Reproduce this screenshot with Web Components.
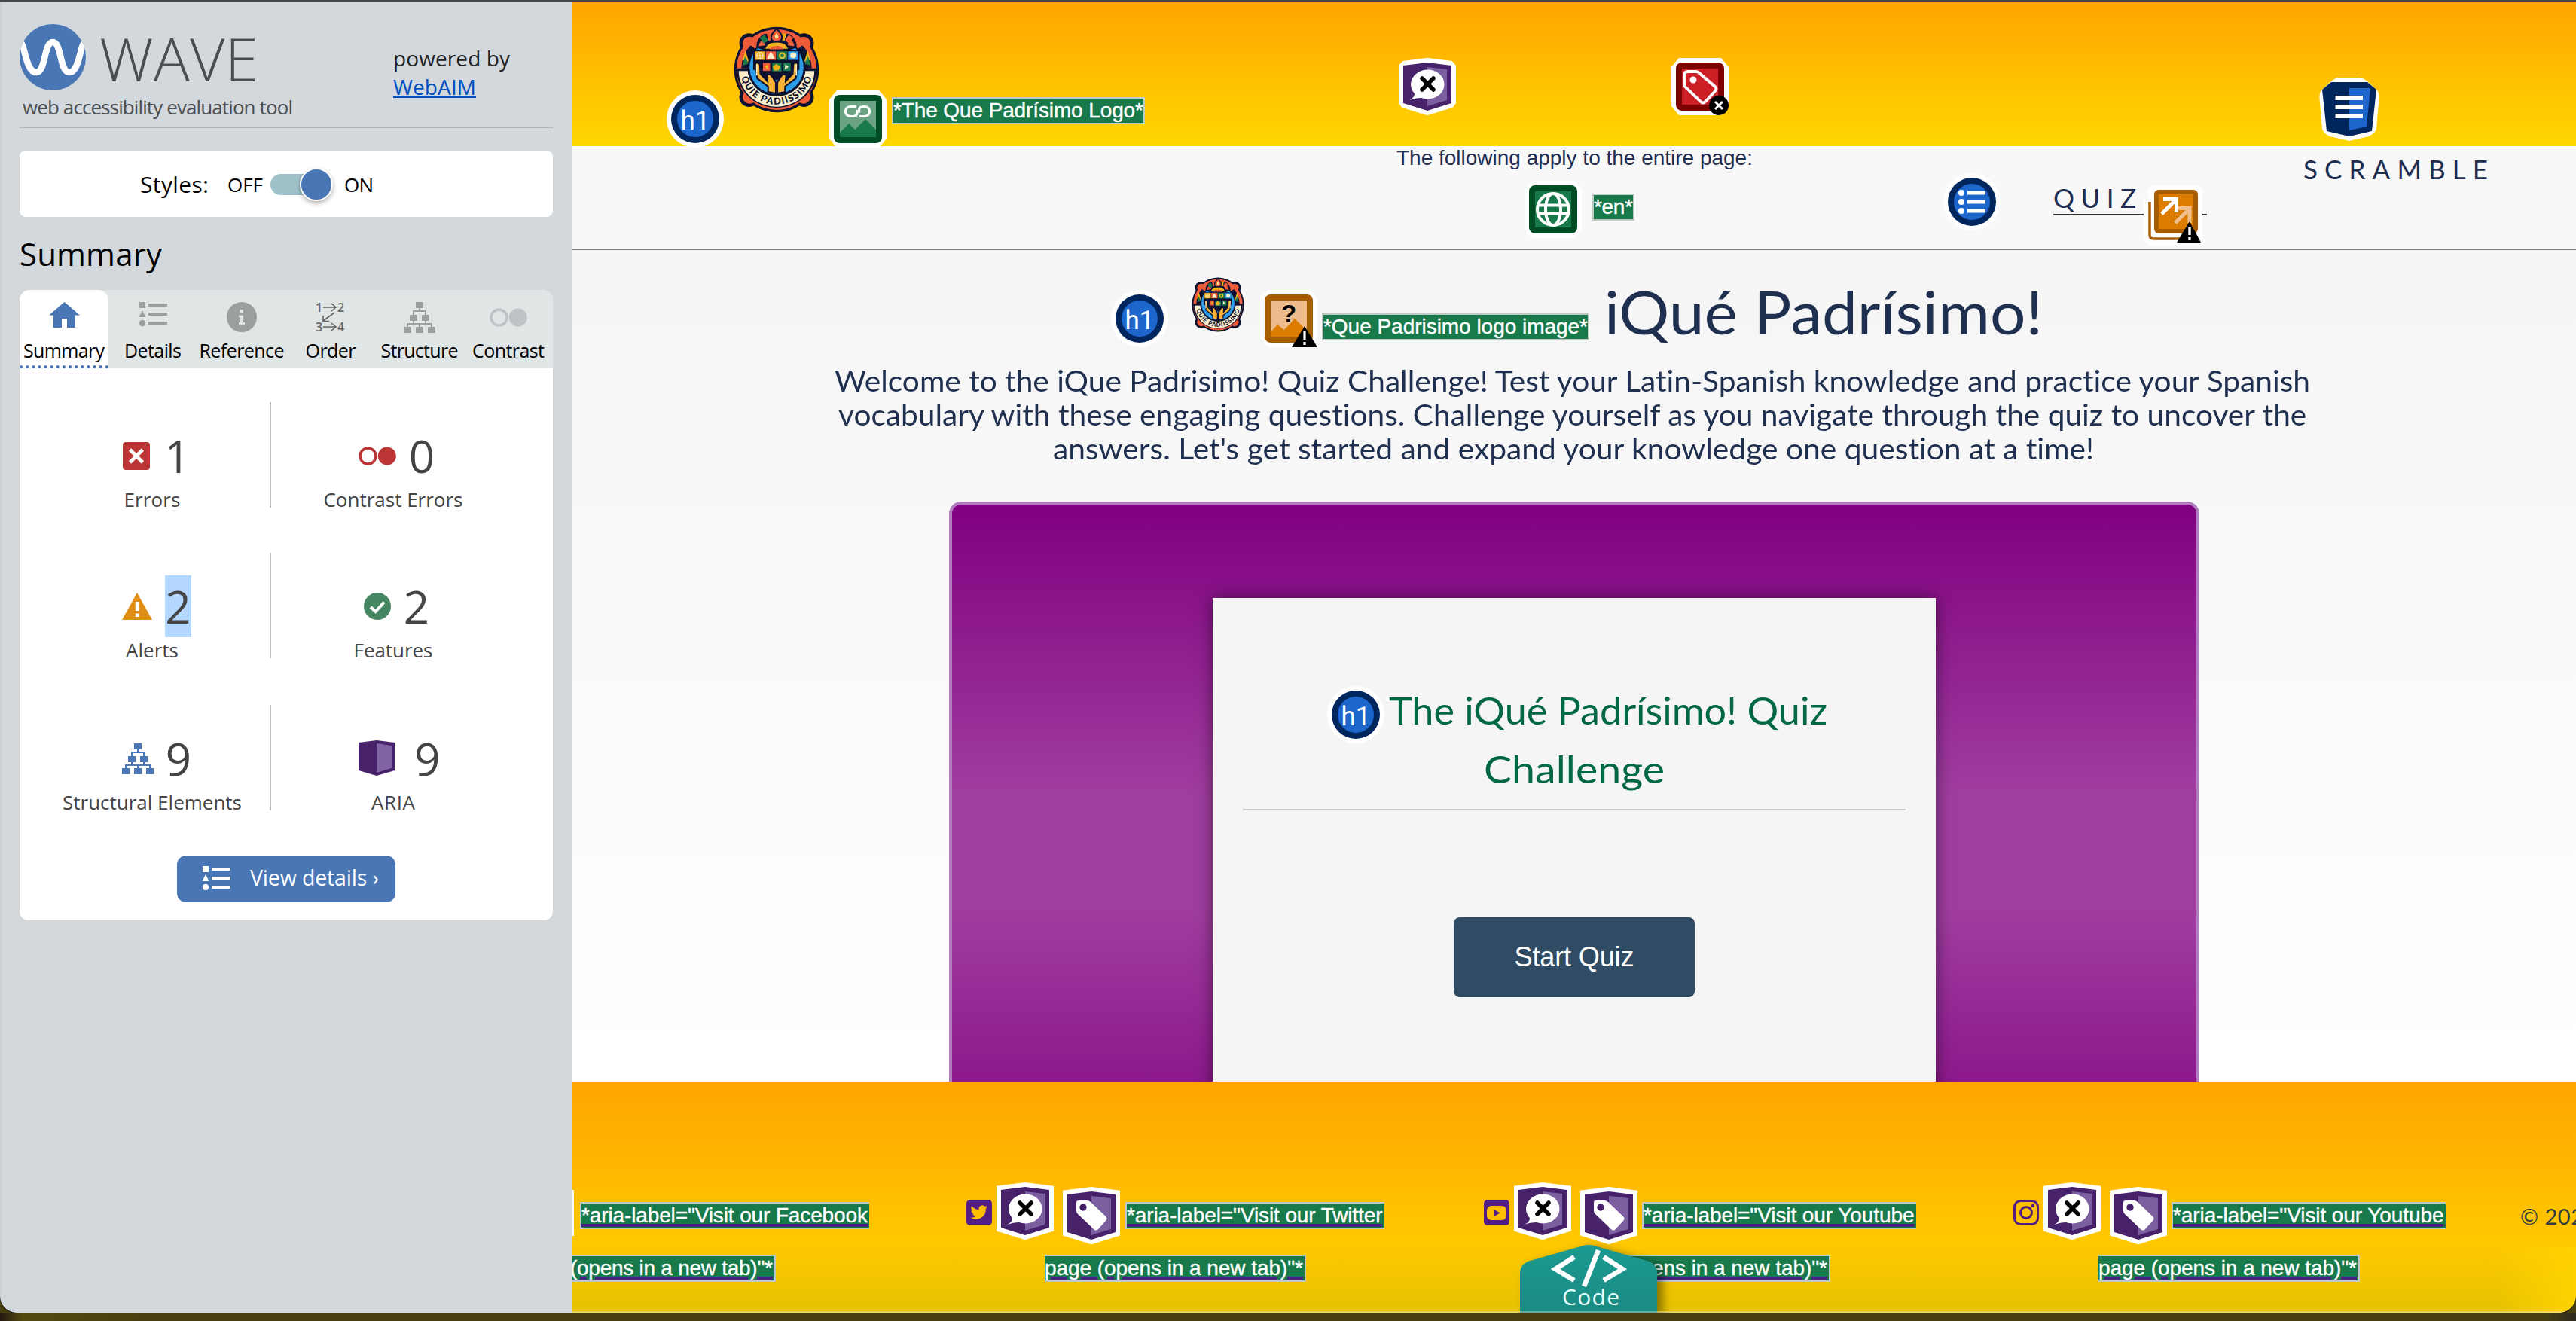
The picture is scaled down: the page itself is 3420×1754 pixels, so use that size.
<!DOCTYPE html>
<html lang="en">
<head>
<meta charset="utf-8">
<title>WAVE - ¡Qué Padrísimo!</title>
<style>
html,body{margin:0;padding:0;width:3420px;height:1754px;overflow:hidden;background:#473f10;font-family:"Open Sans","Noto Sans",sans-serif}
</style>
</head>
<body>
<wave-app></wave-app>
<script>
const FONTS={
  os:['"Open Sans"',.388],
  lato:['Lato',.387],
  arial:['"Liberation Sans"',.3465]
};
const ctx=document.createElement('canvas').getContext('2d');
/* A tiny tracking value keeps ligatures out of the measured width. */
ctx.letterSpacing='0.001px';
function measure(text,font,size,weight){
  ctx.font=`${weight} ${size}px ${FONTS[font][0]}`;
  return ctx.measureText(text).width;
}
function spacing(text,font,size,weight,w){
  return (w-measure(text,font,size,weight))/Math.max(1,[...text].length-1);
}
class Base extends HTMLElement{
  connectedCallback(){
    if(this.shadowRoot)return;
    const r=this.attachShadow({mode:'open'});
    r.innerHTML=`<style>:host{display:block;flex:none;box-sizing:border-box}*{box-sizing:border-box}${this.css()}</style>${this.html()}`;
  }
  css(){return ''}
  html(){return '<slot></slot>'}
  a(n,d){return this.getAttribute(n)??d}
}

/* One line of text set to a given width, by tracking or (with "stretch") by widening the glyphs;
   "base" sets its baseline below the row top. */
class FitText extends Base{
  css(){
    const f=this.a('font','os'),s=+this.a('size'),wt=this.a('weight','400'),w=+this.a('w'),t=this.textContent;
    const st=this.hasAttribute('stretch');
    const fit=st?`letter-spacing:0`:`letter-spacing:${spacing(t,f,s,wt,w).toFixed(3)}px`;
    const mt=this.hasAttribute('base')?(+this.a('base')-(.5+FONTS[f][1])*s):0;
    return `:host{width:${w}px;height:${s}px;font:${wt} ${s}px/${s}px ${FONTS[f][0]},sans-serif;font-variant-ligatures:none;${fit};white-space:nowrap;margin-top:${mt.toFixed(2)}px}
    ${st?`span{display:inline-block;transform-origin:0 50%;transform:scaleX(${(w/measure(t,f,s,wt)).toFixed(4)})}`:''}`;
  }
  html(){return '<span><slot></slot></span>'}
}
/* Green annotation label. */
class AltLabel extends Base{
  css(){
    const w=+this.a('w'),open=this.hasAttribute('open-end'),u=this.hasAttribute('link'),start=this.hasAttribute('open-start');
    const ls=spacing(this.textContent,'arial',28,'400',w-4);
    return `:host{width:${w}px;height:36px;background:#18794a;color:#fff;border:2px solid #bfc9c4;${open?'border-right:0;':''}${start?'border-left:0;':''}padding-left:0;font:28px/32px "Liberation Sans",sans-serif;letter-spacing:${ls.toFixed(3)}px;white-space:nowrap;-webkit-text-stroke:.4px #fff}
    span{${u?'text-decoration:underline #472280 4px;text-underline-offset:2px;':''}}`;
  }
  html(){return '<span><slot></slot></span>'}
}

const cube=(dark,light)=>`<path d="M0 4 32 0 64 4V54L32 64 0 54Z" fill="${dark}"/><path d="M32 6 58 9V50L32 58Z" fill="${light}"/>`;
const warn=`<path d="M53 42 70 70H36Z" fill="#000"/><path d="M53 49V60M53 63V67" stroke="#fff" stroke-width="3.2"/>`;
const halo=(bevel)=>`<path d="M0 4 32 0 64 4V54L32 64 0 54Z" fill="#fff" stroke="#fff" stroke-width="12" stroke-linejoin="${bevel?'bevel':'miter'}"/>`;
const square=(dark,light)=>`<path d="M4-6H60L70 6V58L60 70H4L-6 58V6Z" fill="#fff"/><rect x="-4" y="-4" width="72" height="72" rx="12" fill="#fff"/><rect width="64" height="64" rx="8" fill="${dark}"/><rect x="8" y="8" width="48" height="48" fill="${light}"/>`;
const round=`<circle cx="32" cy="32" r="38" fill="#fff"/><circle cx="32" cy="32" r="32" fill="#00265e"/><circle cx="32" cy="32" r="24" fill="#1c66cc"/>`;
const bubble=`<path d="M8 50Q15 47 15 41A22 19 0 1 1 32 48Q22 45 8 50Z" fill="#fff"/><ellipse cx="32.500" cy="29" rx="22" ry="19.500" fill="#fff"/><path d="M25 21 40 36M40 21 25 36" stroke="#000" stroke-width="5.500" stroke-linecap="round"/>`;
const WAVE={
  h1:round+`<text x="32" y="46" text-anchor="middle" font-family="Roboto" font-weight="400" font-size="35" fill="#fff">h1</text>`,
  linkimg:square('#004d25','#6ba384')+`<path d="M8 50 20 38 28 46 42 32 56 46V56H8Z" fill="#18794a"/><g fill="none" stroke="#fff" stroke-width="3.200"><path d="M30 15.500H22A6.500 6.500 0 0 0 22 28.500H26Q31 28.500 31 22.500V20"/><path d="M34 28.500H41A6.500 6.500 0 0 0 41 15.500H39Q33.500 15.500 33.500 21V23.500"/></g>`,
  bubble:halo(true)+cube('#47226b','#7c5f9f')+bubble,
  bubblesharp:halo(false)+cube('#47226b','#7c5f9f')+bubble,
  tagsharp:halo(false)+cube('#47226b','#7c5f9f')+`<path d="M15 12H26Q29 12 31 14L51 33Q54 36 51 39L41 50Q38 53 35 50L14 30Q12 28 12 26V15Q12 12 15 12Z" fill="#fff"/><circle cx="21" cy="21" r="4.700" fill="#47226b"/>`,
  redtag:square('#7e0002','#cc1f26')+`<path d="M16 12H27Q29 12 31 14L52 32Q55 35 52 38L39 52Q36 55 33 52L13 33Q11 31 11 29V17Q11 12 16 12Z" fill="none" stroke="#fff" stroke-width="3.800"/><circle cx="23" cy="23" r="4.500" fill="#fff"/><circle cx="57" cy="57" r="13" fill="#000"/><path d="M52 52 62 62M62 52 52 62" stroke="#fff" stroke-width="3"/>`,
  globe:square('#004d25','#18794a')+`<g fill="none" stroke="#fff" stroke-width="4"><circle cx="32" cy="32" r="21"/><ellipse cx="32" cy="32" rx="10" ry="21"/><path d="M12 26.500H52M12 37.500H52"/></g>`,
  list:round+`<g fill="#fff"><circle cx="18" cy="20" r="4"/><circle cx="18" cy="32" r="4"/><circle cx="18" cy="44" r="4"/><path d="M26 17.500H50V22.500H26ZM26 29.500H50V34.500H26ZM26 41.500H50V46.500H26Z"/></g>`,
  altq:square('#a65c00','#edbb8c')+`<path d="M8 50 17 40 26 47 40 32 56 48V56H8Z" fill="#db7c00"/><text x="32" y="37" text-anchor="middle" font-family="Liberation Sans" font-weight="700" font-size="33">?</text>`+warn
};
class WaveIcon extends Base{
  css(){return ':host{width:76px;height:76px}svg{display:block;overflow:visible}'}
  html(){return `<svg width="76" height="76" viewBox="-6 -6 76 76">${WAVE[this.a('type')]}</svg>`}
}
class OrderIcon extends Base{
  css(){return ':host{width:80px;height:84px}svg{display:block}'}
  html(){return `<svg width="80" height="84" viewBox="0 0 80 84"><path d="M26 0H54Q59 1 63 4L77 17Q80 20 79.500 28L76 68Q75 73 66 78L40 84 14 78Q5 73 4 68L.5 28Q0 20 3 17L17 4Q21 1 26 0Z" fill="#fff"/><path d="M16 6H64L76 16 70 71 40 78 10 71 4 16Z" fill="#00265e"/><path d="M40 14H68L63 65 40 70Z" fill="#1c66cc"/><path d="M21.500 24H58V30H21.500ZM21.500 36H58V42H21.500ZM21.500 48H58V54H21.500Z" fill="#fff"/></svg>`}
}
class RedundantIcon extends Base{
  css(){return ':host{width:78px;height:80px}svg{display:block}'}
  html(){return `<svg width="78" height="80" viewBox="0 0 78 80"><path d="M12 0H72L78 6V80H8L0 72V18L6 16V6Z" fill="#fff"/><path d="M8 22V66Q8 71 13 71H60" fill="none" stroke="#a65c00" stroke-width="3.500"/><rect x="14" y="6" width="58" height="58" rx="6" fill="#a65c00"/><rect x="20" y="12" width="46" height="46" fill="#db7c00"/><g fill="none" stroke-width="5"><path d="M24 38 42 20M26 18.500H43.500V36" stroke="#fff"/><path d="M42 50 61 31M45 30.500H61V50" stroke="#f1bf8e"/></g><path d="M61 48 76 76H44Z" fill="#000"/><path d="M61 56V66M61 69V73" stroke="#fff" stroke-width="3.400"/></svg>`}
}

class PadriLogo extends Base{
  css(){return `:host{width:${this.a('w')}px;height:${this.a('h')}px}svg{display:block;width:100%;height:100%}`}
  html(){
    const dk='#0c1230';
    return `<svg viewBox="16 16 334 346" preserveAspectRatio="none">
<g fill="${dk}"><ellipse cx="183" cy="189" rx="165" ry="171"/><circle cx="76" cy="82" r="38"/><circle cx="290" cy="82" r="38"/><circle cx="76" cy="300" r="38"/><circle cx="290" cy="300" r="38"/></g>
<g fill="#ef5a38"><ellipse cx="183" cy="189" rx="156" ry="161"/><circle cx="78" cy="84" r="27"/><circle cx="288" cy="84" r="27"/><circle cx="78" cy="298" r="27"/><circle cx="288" cy="298" r="27"/></g>
<path d="M28 190A155 151 0 0 0 338 190" fill="${dk}"/>
<path d="M36 194A147 143 0 0 0 330 194Z" fill="#fbeecb"/>
<path d="M22 184H344V193H22Z" fill="${dk}"/>
<path d="M46 184Q48 128 82 92L106 110V184ZM320 184Q318 128 284 92L260 110V184Z" fill="${dk}"/>
<path d="M50 150 62 112 76 160ZM316 150 304 112 290 160Z" fill="#f3b01d"/><path d="M52 172 60 136 76 166ZM314 172 306 136 290 166Z" fill="#1a7a4e"/>
<ellipse cx="183" cy="182" rx="113" ry="114" fill="${dk}"/><ellipse cx="183" cy="180" rx="105" ry="106" fill="#2b9de8"/>
<path d="M104 100Q104 64 134 46L232 46Q262 64 262 100L232 112H134Z" fill="${dk}"/>
<path d="M114 96Q116 74 134 68L140 92ZM252 96Q250 74 232 68L226 92Z" fill="#ef5a38"/>
<path d="M118 62 136 50 150 72 134 86Z" fill="#1a7a4e"/><path d="M145 46 160 44 168 70 152 74Z" fill="#ef5a38"/><path d="M221 46 206 44 198 70 214 74Z" fill="#f3b01d"/><path d="M248 62 230 50 216 72 232 86Z" fill="#ef5a38"/>
<path d="M136 108Q142 78 183 78T230 108Z" fill="#f3b01d" stroke="${dk}" stroke-width="5"/><path d="M154 108Q162 94 183 94T212 108Z" fill="#ef5a38"/>
<path d="M183 26C216 58 204 74 190 76H176C162 74 150 58 183 26Z" fill="#ef5a38" stroke="${dk}" stroke-width="6"/><path d="M183 42Q196 60 183 68 170 60 183 42Z" fill="#ffe28a"/>
<path d="M92 112H272V190H244V230H122V190H92Z" fill="${dk}"/>
<g><path d="M98 116H138V150H98Z" fill="#f3b01d"/><path d="M141 116H181V150H141Z" fill="#ef5a38"/><path d="M185 116H225V150H185Z" fill="#1a7a4e"/><path d="M228 116H268V150H228Z" fill="#2b9de8"/>
<path d="M130 162H158V194H130Z" fill="#ef5a38"/><path d="M166 162H202V196H166Z" fill="#1a7a4e"/><path d="M210 162H238V194H210Z" fill="#1a7a4e"/></g>
<circle cx="118" cy="133" r="12" fill="none" stroke="#fbeecb" stroke-width="4"/><path d="M106 133H130M118 121V145" stroke="#fbeecb" stroke-width="3"/>
<path d="M146 146 152 130 160 118 170 130 176 146Z" fill="#fbeecb"/><circle cx="205" cy="133" r="10" fill="none" stroke="#e6c62e" stroke-width="6"/><circle cx="248" cy="132" r="12" fill="#fbeecb"/>
<path d="M150 168V188L136 178ZM182 166 198 178 190 192H174L168 178Z" fill="#f3b01d"/><path d="M216 168V188L230 178Z" fill="#fbeecb"/>
<path d="M100 166Q108 156 118 168L120 206 148 236 146 210Q158 204 164 214L180 240V284L150 278V256L108 224Z" fill="#f9b233" stroke="${dk}" stroke-width="6"/>
<path d="M266 166Q258 156 248 168L246 206 218 236 220 210Q208 204 202 214L186 240V284L216 278V256L258 224Z" fill="#f9b233" stroke="${dk}" stroke-width="6"/>
<path d="M106 168V212M260 168V212" stroke="#fbeecb" stroke-width="5"/>
<defs><path id="arc" d="M43 190A140 138 0 0 0 323 190"/></defs>
<text font-family="Lato" font-weight="900" font-size="37" fill="${dk}"><textPath href="#arc" startOffset="30" textLength="376">QUIE PADIISSIMO</textPath></text>
</svg>`}
}

const tree=`<path d="M16 0H26V8H16ZM8 17H18V25H8ZM24 17H34V25H24ZM0 33H10V41H0ZM16 33H26V41H16ZM32 33H42V41H32Z"/><path d="M21 8V12M13 17V12H29V17M13 25V29M29 25V29M5 33V29H37V33M21 29V33" fill="none" stroke="currentColor" stroke-width="2"/>`;
const listI=`<path d="M0 0H8V8H0ZM12 2H37V6H12ZM4 11 8.500 20H-.5ZM12 14H37V18H12ZM12 26H37V30H12Z"/><circle cx="4" cy="28" r="4.200"/>`;
const SVGS={
  home:[41,34,`<path d="M20.500 0 41 17.500H34.500V34H24V22H17V34H6V17.500H0Z"/>`],
  list:[37,33,listI],
  info:[40,40,`<circle cx="20" cy="20" r="20"/><path d="M17.500 10H22V14.500H17.500ZM16 17.500H22V27H24V30H16V27H18V20.500H16Z" fill="#e0e5e6"/>`],
  order:[38,38,`<g font-family="Open Sans" font-weight="600" font-size="16"><text x="-1" y="11.500">1</text><text x="28" y="11.500">2</text><text x="-1" y="37.500">3</text><text x="28" y="37.500">4</text></g><path d="M9 6H26M20 1 26 6 20 11M9 32H26M20 27 26 32 20 37M24 13 9 24M9 17V24.500H17" fill="none" stroke="currentColor" stroke-width="1.600"/>`],
  tree:[42,41,tree],
  contrast:[50,25,`<circle cx="12.500" cy="12.500" r="10.500" fill="none" stroke="currentColor" stroke-width="3.500"/><circle cx="37.800" cy="12.500" r="12"/>`],
  error:[36,37,`<rect width="36" height="37" rx="4"/><path d="M9.500 10 26.500 27M26.500 10 9.500 27" stroke="#fff" stroke-width="4.600"/>`],
  alert:[40,36,`<path d="M20 0 40 36H0Z"/><path d="M20 12V24M20 27.500V32" stroke="#fff" stroke-width="4.400"/>`],
  check:[36,36,`<circle cx="18" cy="18" r="18"/><path d="M9 19 15.500 25 27 12.500" fill="none" stroke="#fff" stroke-width="4"/>`],
  cube:[48,47,`<path d="M0 3 24 0 48 3V40L24 47 0 40Z"/><path d="M24 4 44 7V37L24 43Z" fill="#8263a3"/>`],
  twitter:[34,34,`<rect width="34" height="34" rx="5"/><path transform="translate(5.500 6) scale(.98)" d="M23 3.600A9 9 0 0 1 20.300 4.400 4.800 4.800 0 0 0 22.400 1.700 9 9 0 0 1 19.400 2.900 4.700 4.700 0 0 0 11.400 7.200 13 13 0 0 1 1.700 2.300 4.700 4.700 0 0 0 3.100 8.600 4.600 4.600 0 0 1 1 8 4.700 4.700 0 0 0 4.800 12.700 4.700 4.700 0 0 1 2.700 12.800 4.700 4.700 0 0 0 7.100 16 9.500 9.500 0 0 1 0 18 13.300 13.300 0 0 0 20.600 6Z" fill="#ffbe00"/>`],
  youtube:[34,34,`<rect width="34" height="34" rx="5"/><rect x="4" y="8" width="26" height="19" rx="6" fill="#ffbe00"/><path d="M14 13 21.500 17.500 14 22Z"/>`],
  insta:[34,34,`<g fill="none" stroke="currentColor" stroke-width="3"><rect x="1.500" y="1.500" width="31" height="31" rx="8"/><circle cx="17" cy="17" r="7.500"/></g><circle cx="26" cy="8" r="2.200"/>`]
};
class GlyphIcon extends Base{
  css(){const s=SVGS[this.a('name')];return `:host{width:${s[0]}px;height:${s[1]}px}svg{display:block;overflow:visible;fill:currentColor}`}
  html(){const s=SVGS[this.a('name')];return `<svg width="${s[0]}" height="${s[1]}" viewBox="0 0 ${s[0]} ${s[1]}">${s[2]}</svg>`}
}

class WaveTab extends Base{
  css(){return `:host{width:118px;height:104px;display:flex;flex-direction:column;align-items:center;color:#9c9f9f}
  :host([active]){background:#fff;border-radius:14px 14px 0 0;border-bottom:4px dotted #4976b5;color:#4976b5}
  :host([dim]){color:#c0c3c5}:host([deep]){color:#666}
  .i{height:68px;padding-top:${this.a('top','16')}px;flex:none}
  fit-text{color:#000}`}
  html(){return `<div class="i"><glyph-icon name="${this.a('icon')}"></glyph-icon></div><fit-text size="25" w="${this.a('w')}">${this.textContent}</fit-text>`}
}
class StatCell extends Base{
  css(){return `:host{height:140px;${this.a('side')=='l'?'margin-left:20px;border-right:2px solid #bfbfbf;width:314px;':'width:324px;'}display:flex;flex-direction:column;align-items:center}
  .t{display:flex;align-items:center;height:82px;margin-top:30px;padding-left:${this.a('shift','12')}px}
  .n{font-size:60px;line-height:82px;margin-left:${this.a('gap','19')}px;color:#444}
  .n.sel{background:#b3d7ff}
  glyph-icon{color:${this.a('color')};margin-top:${this.a('icon')=='cube'?'-2px':'0'}}
  fit-text{color:#444;margin-top:4px!important}`}
  html(){return `<div class="t"><glyph-icon name="${this.a('icon')}"></glyph-icon><span class="n ${this.hasAttribute('selected')?'sel':''}">${this.a('n')}</span></div><fit-text size="26" w="${this.a('w')}">${this.textContent}</fit-text>`}
}
class WaveSidebar extends Base{
  css(){return `:host{width:760px;height:1741px;background:linear-gradient(90deg,#c9cfd4 0,#d3d8dc 4px);padding:30px 26px 0;border-bottom-left-radius:22px}
  .brand{display:flex;align-items:flex-start;height:138px;border-bottom:2px solid #b0b5b9;color:#4b4e50}
  .left{width:496px;flex:none}.logo{display:flex;align-items:flex-start;height:88px}.logo svg{flex:none;display:block;margin-right:18px}
  .left .sub{display:flex;padding-left:4px}
  .pow{color:#222}.pow .lk{display:flex;align-items:flex-start;color:#0050c0;border-bottom:2px solid #0050c0;height:39px;width:110px}
  .card{margin-top:30px;background:#fff;border-radius:8px;height:88px;display:flex;align-items:flex-start;padding-left:160px;color:#000}
  .sw{position:relative;width:82px;height:28px;margin:31px 0 0 10px;flex:none}
  .tr{width:62px;height:28px;border-radius:14px;background:#9fc2ca}
  .kn{position:absolute;left:39px;top:-8px;width:44px;height:44px;border-radius:50%;background:#4976b5;border:2px solid #fff;box-shadow:0 3px 6px rgba(0,0,0,.3)}
  .h{display:flex;height:97px}
  .panel{background:#fff;border-radius:14px 14px 12px 12px;height:837px}
  .tabs{display:flex;background:#e0e5e6;border-radius:14px 14px 0 0;height:104px}
  .row{display:flex;height:140px;margin-top:60px}.row.first{margin-top:45px}.row.third{margin-top:62px}
  .btn{margin:60px 0 0 209px;width:290px;height:62px;border-radius:12px;background:#4976b5;color:#fff;display:flex;align-items:flex-start;padding:0 0 0 34px}
  .btn glyph-icon{margin-top:14px}`}
  html(){return `<div class="brand"><div class="left"><div class="logo">
  <svg width="88" height="88" viewBox="0 0 88 88"><defs><clipPath id="c"><circle cx="44" cy="44" r="44"/></clipPath></defs><circle cx="44" cy="44" r="44" fill="#4976b5"/><path clip-path="url(#c)" d="M1 24C7 26 8 64 22 64 35 64 32 24 44 24 56 24 53 64 66 64 80 64 80 26 87 24" fill="none" stroke="#fff" stroke-width="8.500"/></svg>
  <fit-text size="80" weight="300" w="211" base="76">WAVE</fit-text></div><div class="sub"><fit-text size="26" w="359" base="32">web accessibility evaluation tool</fit-text></div></div>
  <div class="pow"><fit-text size="28" w="155" base="56">powered by</fit-text><div class="lk"><fit-text size="28" w="110" base="35">WebAIM</fit-text></div></div></div>
  <div class="card"><fit-text size="30" w="91" base="57">Styles:</fit-text><fit-text style="margin-left:25px" size="26" w="47" base="55">OFF</fit-text><div class="sw"><div class="tr"></div><div class="kn"></div></div><fit-text style="margin-left:16px" size="26" w="39" base="55">ON</fit-text></div>
  <div class="h"><fit-text size="42" w="189" base="65">Summary</fit-text></div>
  <div class="panel"><div class="tabs">
  <wave-tab active icon="home" w="108">Summary</wave-tab><wave-tab icon="list" w="76">Details</wave-tab><wave-tab icon="info" w="113">Reference</wave-tab><wave-tab deep icon="order" top="17" w="67">Order</wave-tab><wave-tab icon="tree" w="103">Structure</wave-tab><wave-tab dim icon="contrast" top="24" w="96">Contrast</wave-tab></div>
  <div class="row first"><stat-cell side="l" icon="error" color="#bb3535" n="1" w="75">Errors</stat-cell><stat-cell side="r" icon="contrast" color="#bb3535" n="0" gap="17" shift="9" w="185">Contrast Errors</stat-cell></div>
  <div class="row"><stat-cell side="l" icon="alert" color="#e18e17" n="2" gap="17" selected w="70">Alerts</stat-cell><stat-cell side="r" icon="check" color="#458662" n="2" gap="17" shift="9" w="105">Features</stat-cell></div>
  <div class="row third"><stat-cell side="l" icon="tree" color="#4976b5" n="9" gap="16" w="238">Structural Elements</stat-cell><stat-cell side="r" icon="cube" color="#47226b" n="9" gap="26" shift="17" w="58">ARIA</stat-cell></div>
  <div class="btn"><glyph-icon name="list"></glyph-icon><fit-text style="margin-left:26px" size="28.500" w="171" base="40">View details ›</fit-text></div>
  </div>`}
}

class SiteHeader extends Base{
  css(){return `:host{position:relative;z-index:1}
  .top{height:192px;background:linear-gradient(#ffa500,#ffd700);display:flex;align-items:flex-start}
  .nav{height:138px;background:#f8f8f8;border-bottom:2px solid #777;display:flex;align-items:flex-start;color:#1f2d50}
  .apply{width:472px;flex:none;margin-left:1094px}.lang{display:flex;align-items:flex-start;margin:16px 0 0 170px}
  .quiz{display:flex;align-items:flex-start;flex:none;width:204px;height:92px;border-bottom:2px solid #333;margin-left:70px}`}
  html(){return `<div class="top">
  <wave-icon type="h1" style="margin:118px 0 0 125px"></wave-icon><padri-logo w="114" h="115" style="margin:33px 0 0 13px"></padri-logo>
  <wave-icon type="linkimg" style="margin:118px 0 0 13px"></wave-icon><alt-label w="336" style="margin:127px 0 0 7px">*The Que Padrísimo Logo*</alt-label>
  <wave-icon type="bubble" style="margin:75px 0 0 337px"></wave-icon><wave-icon type="redtag" style="margin:75px 0 0 286px"></wave-icon>
  <order-icon style="margin:101px 0 0 784px"></order-icon></div>
  <div class="nav"><div class="apply"><fit-text font="arial" size="28" w="473" base="26">The following apply to the entire page:</fit-text>
  <div class="lang"><wave-icon type="globe"></wave-icon><alt-label w="56" style="margin:17px 0 0 14px">*en*</alt-label></div></div>
  <wave-icon type="list" style="margin:36px 0 0 254px"></wave-icon>
  <div class="quiz"><fit-text font="lato" size="35" w="110" base="82">QUIZ</fit-text><redundant-icon style="margin:52px 0 0 10px"></redundant-icon></div>
  <fit-text style="margin-left:128px" font="lato" size="35" w="245" base="44">SCRAMBLE</fit-text></div>`}
}
class SiteHero extends Base{
  css(){return `:host{height:1104px;background:linear-gradient(#f5f5f5,#fff);overflow:hidden;color:#1f2f50}
  .title{display:flex;align-items:flex-start;height:150px}
  .p{display:flex;flex-direction:column;align-items:center;width:2660px}.p fit-text{margin:3.500px 0!important}
  .box{margin:49px 0 0 500px;width:1660px;height:930px;border:4px solid #b07cbd;border-radius:16px;background:linear-gradient(purple,#a03e9f 42%,#a03e9f 58%,purple);padding:124px 0 0 346px}
  .card{width:960px;height:800px;background:#f5f5f5;box-shadow:0 0 20px rgba(0,0,0,.5);color:#006845}
  .l1{display:flex;align-items:flex-start;height:200px}.l2{display:flex;justify-content:center;height:80px}
  .rule{height:2px;background:#ccc;margin:0 40px}
  .btn{width:320px;height:106px;border-radius:8px;background:#304b64;color:#fff;margin:142px auto 0;display:flex;justify-content:center}`}
  html(){return `<div class="title"><wave-icon type="h1" style="margin:53px 0 0 715px"></wave-icon><padri-logo w="70" h="73" style="margin:36px 0 0 31px"></padri-logo>
  <wave-icon type="altq" style="margin:53px 0 0 21px"></wave-icon><alt-label w="355" style="margin:84px 0 0 6px">*Que Padrisimo logo image*</alt-label>
  <fit-text stretch style="margin-left:20px" font="lato" size="80" w="582" base="112">iQué Padrísimo!</fit-text></div>
  <div class="p"><fit-text stretch font="lato" size="38" w="1964">Welcome to the iQue Padrisimo! Quiz Challenge! Test your Latin-Spanish knowledge and practice your Spanish</fit-text>
  <fit-text stretch font="lato" size="38" w="1955">vocabulary with these engaging questions. Challenge yourself as you navigate through the quiz to uncover the</fit-text>
  <fit-text stretch font="lato" size="38" w="1384">answers. Let's get started and expand your knowledge one question at a time!</fit-text></div>
  <div class="box"><div class="card"><div class="l1"><wave-icon type="h1" style="margin:117px 0 0 152px"></wave-icon><fit-text stretch style="margin-left:6px" font="lato" size="50" w="582" base="168">The iQué Padrísimo! Quiz</fit-text></div>
  <div class="l2"><fit-text stretch font="lato" size="50" w="240" base="46">Challenge</fit-text></div><div class="rule"></div>
  <div class="btn"><fit-text font="arial" size="36" w="159" base="65">Start Quiz</fit-text></div></div></div>`}
}
class SocialItem extends Base{
  css(){return `.a{display:flex;align-items:flex-start;height:230px}.a glyph-icon{color:#541d85;margin-top:157px}`}
  html(){return `<div class="a"><glyph-icon name="${this.a('icon')}"></glyph-icon><wave-icon type="bubblesharp" style="margin:134px 0 0 6px"></wave-icon><wave-icon type="tagsharp" style="margin:140px 0 0 12px"></wave-icon>
  <alt-label link open-end w="${this.a('w')}" style="margin:160px 0 0 ${this.a('gap')}px">*aria-label="Visit our ${this.a('name')}</alt-label></div><alt-label link open-start w="347" style="margin-left:${this.a('indent')}px">page (opens in a new tab)"*</alt-label>`}
}
class SiteFooter extends Base{
  css(){return `:host{position:relative;height:307px;overflow:hidden;background:linear-gradient(90deg,transparent 96%,#ffd200 100%) 0 220px/100% 87px no-repeat,linear-gradient(rgba(0,0,0,0) 215px,rgba(0,0,0,.1)),linear-gradient(#ffa500,#ffd700);border-bottom-right-radius:22px;display:flex;align-items:flex-start}
  .first{width:394px;flex:none}.a{display:flex;align-items:flex-start;height:230px}.w{width:2px;height:61px;background:#fff;margin-top:144px}
  .code{position:absolute;left:1258px;top:216px;width:200px;height:91px}.code svg{position:absolute;left:0;top:0;overflow:visible}
  .code fit-text{position:absolute;left:56px;color:#e8ffff}
  .c{color:#333f3e}
  .edge{position:absolute;left:0;right:0;bottom:0;height:2px;background:rgba(255,255,255,.3)}`}
  html(){return `<div class="first"><div class="a"><div class="w"></div><alt-label link open-end w="384" style="margin:160px 0 0 8px">*aria-label="Visit our Facebook</alt-label></div><alt-label link open-start w="273" style="margin-left:-3px">(opens in a new tab)"*</alt-label></div>
  <social-item style="margin-left:129px" icon="twitter" name="Twitter" w="344" gap="7" indent="104"></social-item>
  <social-item style="margin-left:132px" icon="youtube" name="Youtube" w="364" gap="6" indent="113"></social-item>
  <social-item style="margin-left:129px" icon="insta" name="Youtube" w="364" gap="6" indent="113"></social-item>
  <fit-text class="c" style="margin-left:99px" font="lato" size="29" w="84" base="190">© 202</fit-text>
  <div class="code"><svg width="200" height="91" viewBox="0 0 200 91"><defs><linearGradient id="g" x2="0" y2="1"><stop stop-color="#1b9a91"/><stop offset="1" stop-color="#1a8b83"/></linearGradient></defs>
  <path d="M0 91V38Q0 28 10 23L84 2Q91 0 98 2L172 23Q182 28 182 38V91Z" fill="url(#g)" style="filter:drop-shadow(8px 3px 6px rgba(0,0,0,.4))"/>
  <path d="M72 17 47 33 72 48M111 17 136 33 111 48M104 8 85 56" fill="none" stroke="#fff" stroke-width="6.500"/></svg>
  <fit-text size="30" w="76" base="82">Code</fit-text></div><div class="edge"></div>`}
}
class WaveApp extends Base{
  css(){return `:host{width:3420px;height:1754px;background:#473f10}
  .top{height:2px;background:#44484a}
  .win{display:flex;background:#050505;border-radius:0 0 22px 22px;height:1742px;width:3420px}
  .page{width:2660px;flex:none}
  .desk{height:10px;background:linear-gradient(90deg,#241a10,#54490f 30px,#473f10 200px,#473f10 3380px,#2d2a20)}`}
  html(){return `<div class="top"></div><div class="win"><wave-sidebar></wave-sidebar><div class="page"><site-header></site-header><site-hero></site-hero><site-footer></site-footer></div></div><div class="desk"></div>`}
}
for(const [n,c] of Object.entries({'fit-text':FitText,'alt-label':AltLabel,'wave-icon':WaveIcon,'order-icon':OrderIcon,'redundant-icon':RedundantIcon,'padri-logo':PadriLogo,'glyph-icon':GlyphIcon,'wave-tab':WaveTab,'stat-cell':StatCell,'wave-sidebar':WaveSidebar,'site-header':SiteHeader,'site-hero':SiteHero,'social-item':SocialItem,'site-footer':SiteFooter,'wave-app':WaveApp}))customElements.define(n,c);
</script>
</body>
</html>
